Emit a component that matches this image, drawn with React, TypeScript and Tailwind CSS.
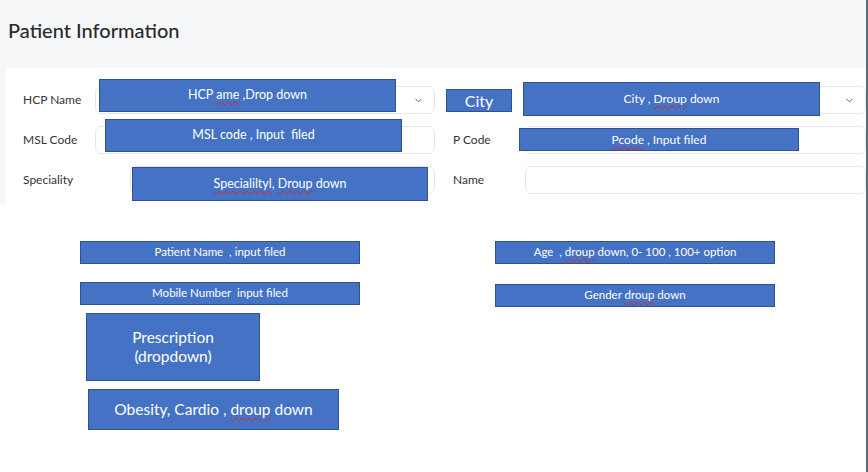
import { ChevronDown } from "lucide-react"

const note = "absolute flex items-center justify-center bg-[#4472c4] border border-[#2f528f] text-white leading-tight text-center"
const squiggle = "underline decoration-wavy decoration-[#e02020] decoration-1 underline-offset-2"

function Field({ label, select, indent }: { label: string; select?: boolean; indent?: boolean }) {
  return (
    <div className="flex items-center h-[28px]">
      <span className="w-[72px] shrink-0 text-[12px] text-[#333]">{label}</span>
      <div
        className={`flex-1 h-full rounded-md border border-[#e4e7eb] bg-white flex items-center justify-end pr-[10px] ${
          indent ? "ml-[35px]" : ""
        }`}
      >
        {select && <ChevronDown className="w-[11px] h-[11px] text-[#555]" strokeWidth={2} />}
      </div>
    </div>
  )
}

export default function App() {
  return (
    <div className="relative w-[868px] h-[472px] bg-white overflow-hidden" style={{ fontFamily: "Lato, 'Noto Sans', sans-serif" }}>
      <section className="w-[866px] h-[205px] bg-[#f6f7f9] flex flex-col">
        <h1 className="pl-2 pt-[15px] h-[68px] text-[20px] font-medium text-[#2a2a2a]">Patient Information</h1>
        <div className="ml-[6px] flex-1 bg-white rounded-tl-sm pt-[18px] pl-[17px] grid grid-cols-[412px_1fr] gap-x-[18px]">
          <div className="flex flex-col gap-[12px]">
            <Field label="HCP Name" select />
            <Field label="MSL Code" />
            <Field label="Speciality" indent />
          </div>
          <div className="flex flex-col gap-[12px]">
            {/* the row label here sits under the "City" note */}
            <Field label="" select />
            <Field label="P Code" />
            <Field label="Name" />
          </div>
        </div>
      </section>
      <div className="absolute top-0 left-[866px] w-[2px] h-[472px] bg-[#5c6b7d]" />

      {/* mockup annotations */}
      <div className={`${note} left-[99px] top-[79px] w-[297px] h-[33px] text-[12.5px] pb-[2px]`}>
        <span>
          HCP <span className={squiggle}>ame</span> ,Drop down
        </span>
      </div>
      <div className={`${note} left-[105px] top-[119px] w-[297px] h-[33px] text-[12.5px] pb-[2px]`}>MSL code , Input&nbsp; filed</div>
      <div className={`${note} left-[132px] top-[167px] w-[296px] h-[34px] text-[12.5px]`}>
        <span>
          <span className={squiggle}>Specialiltyl</span>, <span className={squiggle}>Droup</span> down
        </span>
      </div>
      <div className={`${note} left-[446px] top-[89px] w-[66px] h-[23px] text-[16px]`}>City</div>
      <div className={`${note} left-[523px] top-[82px] w-[297px] h-[34px] text-[12px] pb-[2px]`}>
        <span>
          City , <span className={squiggle}>Droup</span> down
        </span>
      </div>
      <div className={`${note} left-[519px] top-[128px] w-[280px] h-[23px] text-[12px]`}>
        <span>
          <span className={squiggle}>Pcode</span> , Input filed
        </span>
      </div>

      <div className={`${note} left-[80px] top-[241px] w-[280px] h-[23px] text-[11.5px]`}>Patient Name&nbsp; , input filed</div>
      <div className={`${note} left-[80px] top-[282px] w-[280px] h-[23px] text-[11.5px]`}>Mobile Number&nbsp; input filed</div>
      <div className={`${note} left-[86px] top-[313px] w-[174px] h-[68px] text-[15.5px]`}>
        Prescription
        <br />
        (dropdown)
      </div>
      <div className={`${note} left-[88px] top-[389px] w-[251px] h-[41px] text-[15.5px]`}>
        <span>
          Obesity, Cardio , <span className={squiggle}>droup</span> down
        </span>
      </div>
      <div className={`${note} left-[495px] top-[241px] w-[280px] h-[23px] text-[11.5px]`}>
        <span>
          Age&nbsp; , <span className={squiggle}>droup</span> down, 0- 100 , 100+ option
        </span>
      </div>
      <div className={`${note} left-[495px] top-[284px] w-[280px] h-[23px] text-[11.5px]`}>
        <span>
          Gender <span className={squiggle}>droup</span> down
        </span>
      </div>
    </div>
  )
}
